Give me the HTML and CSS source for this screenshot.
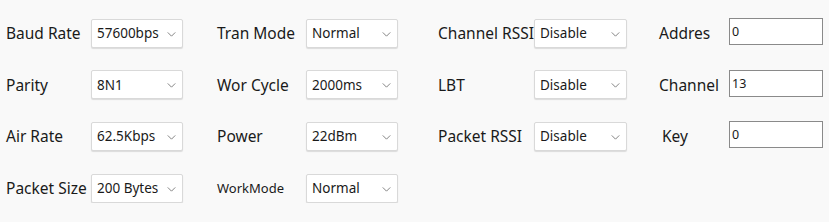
FILE: index.html
```html
<!DOCTYPE html>
<html lang="en">
<head>
    <meta charset="UTF-8">
    <title>Module Settings</title>
    <link rel="stylesheet" href="styles.css">
</head>
<body>
    <div class="panel">
        <div class="field"><span class="label">Baud Rate</span><div class="combo">57600bps<svg viewBox="0 0 10 6"><path d="M0.5 0.5 L5 5 L9.5 0.5"/></svg></div></div>
        <div class="field"><span class="label">Tran Mode</span><div class="combo">Normal<svg viewBox="0 0 10 6"><path d="M0.5 0.5 L5 5 L9.5 0.5"/></svg></div></div>
        <div class="field"><span class="label wide">Channel RSSI</span><div class="combo c3">Disable<svg viewBox="0 0 10 6"><path d="M0.5 0.5 L5 5 L9.5 0.5"/></svg></div></div>
        <div class="field"><span class="label short">Addres</span><div class="textbox">0</div></div>

        <div class="field"><span class="label">Parity</span><div class="combo">8N1<svg viewBox="0 0 10 6"><path d="M0.5 0.5 L5 5 L9.5 0.5"/></svg></div></div>
        <div class="field"><span class="label">Wor Cycle</span><div class="combo">2000ms<svg viewBox="0 0 10 6"><path d="M0.5 0.5 L5 5 L9.5 0.5"/></svg></div></div>
        <div class="field"><span class="label wide">LBT</span><div class="combo c3">Disable<svg viewBox="0 0 10 6"><path d="M0.5 0.5 L5 5 L9.5 0.5"/></svg></div></div>
        <div class="field"><span class="label short">Channel</span><div class="textbox">13</div></div>

        <div class="field"><span class="label">Air Rate</span><div class="combo">62.5Kbps<svg viewBox="0 0 10 6"><path d="M0.5 0.5 L5 5 L9.5 0.5"/></svg></div></div>
        <div class="field"><span class="label">Power</span><div class="combo">22dBm<svg viewBox="0 0 10 6"><path d="M0.5 0.5 L5 5 L9.5 0.5"/></svg></div></div>
        <div class="field"><span class="label wide">Packet RSSI</span><div class="combo c3">Disable<svg viewBox="0 0 10 6"><path d="M0.5 0.5 L5 5 L9.5 0.5"/></svg></div></div>
        <div class="field"><span class="label short key">Key</span><div class="textbox">0</div></div>

        <div class="field"><span class="label">Packet Size</span><div class="combo">200 Bytes<svg viewBox="0 0 10 6"><path d="M0.5 0.5 L5 5 L9.5 0.5"/></svg></div></div>
        <div class="field"><span class="label small">WorkMode</span><div class="combo">Normal<svg viewBox="0 0 10 6"><path d="M0.5 0.5 L5 5 L9.5 0.5"/></svg></div></div>
    </div>
</body>
</html>
```
FILE: styles.css
```css
body {
    margin: 0;
    background-color: #f9f9f9;
    font-family: "Noto Sans", "Liberation Sans", sans-serif;
    color: #1a1a1a;
}
.panel {
    display: grid;
    grid-template-columns: 211px 221px 221px 170px;
    grid-auto-rows: 30px;
    row-gap: 21.7px;
    padding: 18px 0 0 6px;
}
.field {
    display: flex;
    align-items: center;
}
.label {
    width: 85px;
    font-size: 15.5px;
    white-space: nowrap;
}
.field:nth-child(4n+2) .label {
    width: 89px;
}
.label.wide {
    width: 96px;
}
.label.short {
    width: 70px;
}
.label.key {
    padding-left: 3px;
    width: 67px;
}
.label.small {
    font-size: 13px;
}
.combo {
    position: relative;
    box-sizing: border-box;
    width: 92px;
    height: 29px;
    padding-left: 5px;
    display: flex;
    align-items: center;
    background-color: #fff;
    border: 1px solid #d9d9d9;
    border-radius: 2px;
    box-shadow: 0 1px 1px rgba(0,0,0,0.12);
    font-size: 13.5px;
}
.combo.c3 {
    width: 93px;
}
.combo svg {
    position: absolute;
    right: 6px;
    top: 12px;
    width: 9px;
    height: 5px;
    fill: none;
    stroke: #6b6b6b;
    stroke-width: 1;
}
.textbox {
    align-self: flex-start;
    box-sizing: border-box;
    width: 94px;
    height: 27px;
    padding: 4px 0 0 2px;
    background-color: #fff;
    border: 1px solid #8a8a8a;
    font-size: 12.5px;
}
```
